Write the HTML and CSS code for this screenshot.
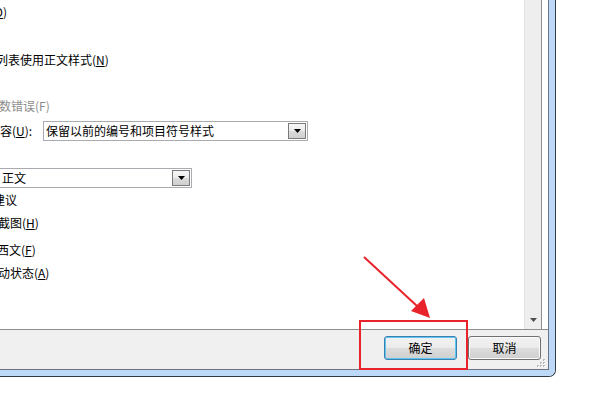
FILE: index.html
```html
<!DOCTYPE html>
<html lang="zh-CN">
<head>
<meta charset="utf-8">
<title>Word 选项</title>
<link rel="stylesheet" href="styles.css">
</head>
<body>
<div class="window">
  <div class="frame">
    <div class="client">
      <div class="main">
        <div class="pane">
          <div class="scrollarea">
            <div class="row r1"><span class="t1">(<span class="ak">O</span>)</span></div>
            <div class="row r2"><span class="t2">编号列表使用正文样式(<span class="ak">N</span>)</span></div>
            <div class="row r3 disabled"><span class="t3">数错误(F)</span></div>
            <div class="row r4">
              <span class="label4">内容(<span class="ak">U</span>):</span>
              <div class="combo combo1">
                <span class="combo-text">保留以前的编号和项目符号样式</span>
                <span class="combo-btn"><svg width="7" height="4" viewBox="0 0 7 4"><path d="M0 0H7L3.5 4Z" fill="#000"/></svg></span>
              </div>
            </div>
            <div class="row r5">
              <div class="combo combo2">
                <span class="combo-text">正文</span>
                <span class="combo-btn"><svg width="7" height="4" viewBox="0 0 7 4"><path d="M0 0H7L3.5 4Z" fill="#000"/></svg></span>
              </div>
            </div>
            <div class="row r6"><span class="t6">建议</span></div>
            <div class="row r7"><span class="t7">截图(<span class="ak">H</span>)</span></div>
            <div class="row r8"><span class="t8">西文(<span class="ak">F</span>)</span></div>
            <div class="row r9"><span class="t9">动状态(<span class="ak">A</span>)</span></div>
          </div>
          <div class="scrollbar">
            <div class="sb-down"><svg width="7" height="4" viewBox="0 0 7 4"><path d="M0 0H7L3.5 4Z" fill="#4d4d4d"/></svg></div>
          </div>
        </div>
        <div class="gap"></div>
      </div>
      <div class="footer">
        <button class="btn btn-default">确定</button>
        <button class="btn">取消</button>
        <svg class="grip" width="9" height="9" viewBox="0 0 9 9">
          <rect x="6" y="0" width="2" height="2" fill="#b8b8b8"/>
          <rect x="3" y="3" width="2" height="2" fill="#b8b8b8"/>
          <rect x="6" y="3" width="2" height="2" fill="#b8b8b8"/>
          <rect x="0" y="6" width="2" height="2" fill="#b8b8b8"/>
          <rect x="3" y="6" width="2" height="2" fill="#b8b8b8"/>
          <rect x="6" y="6" width="2" height="2" fill="#b8b8b8"/>
          <rect x="7" y="1" width="1" height="1" fill="#fff"/>
          <rect x="4" y="4" width="1" height="1" fill="#fff"/>
          <rect x="7" y="4" width="1" height="1" fill="#fff"/>
          <rect x="1" y="7" width="1" height="1" fill="#fff"/>
          <rect x="4" y="7" width="1" height="1" fill="#fff"/>
          <rect x="7" y="7" width="1" height="1" fill="#fff"/>
        </svg>
      </div>
    </div>
  </div>
</div>
<svg class="annotation" width="600" height="400" viewBox="0 0 600 400">
  <rect x="360" y="321" width="107" height="48" fill="none" stroke="#e8232b" stroke-width="2"/>
  <line x1="364" y1="257" x2="417" y2="306" stroke="#e8232b" stroke-width="2"/>
  <polygon points="430,318 411,311 424,298" fill="#e8232b"/>
</svg>
</body>
</html>
```

FILE: styles.css
```css
html, body {
  margin: 0;
  padding: 0;
}
body {
  width: 600px;
  height: 400px;
  overflow: hidden;
  background: #ffffff;
  font-family: "Noto Sans CJK SC", "Microsoft YaHei", sans-serif;
  font-size: 12px;
  color: #000;
  position: relative;
}
.window {
  width: 556px;
  height: 377px;
  box-sizing: border-box;
  border-right: 1px solid #323c47;
  border-bottom: 1px solid #323c47;
  border-bottom-right-radius: 7px;
  overflow: hidden;
}
.frame {
  height: 100%;
  box-sizing: border-box;
  background: #bcdaf7;
  padding-right: 6px;
  padding-bottom: 6px;
  border-bottom-right-radius: 6px;
}
.client {
  width: 549px;
  height: 370px;
  box-sizing: border-box;
  border-right: 1px solid #6b7480;
  border-bottom: 1px solid #6b7480;
  display: flex;
  flex-direction: column;
}
.main {
  height: 330px;
  box-sizing: border-box;
  border-bottom: 1px solid #8f8f8f;
  display: flex;
  background: #fff;
}
.pane {
  width: 542px;
  box-sizing: border-box;
  border-right: 1px solid #8f8f8f;
  display: flex;
}
.gap {
  flex: 1;
  background: #fff;
}
.scrollarea {
  width: 524px;
  overflow: hidden;
  padding-top: 2px;
  box-sizing: border-box;
  white-space: nowrap;
}
.row {
  height: 20px;
  line-height: 20px;
  display: flex;
  align-items: center;
}
.r2 { margin-top: 28px; }
.r3 { margin-top: 26px; }
.r4 { margin-top: 5px; }
.r5 { margin-top: 27px; }
.r6 { margin-top: 2px; }
.r7 { margin-top: 3px; }
.r8 { margin-top: 7px; }
.r9 { margin-top: 3px; }

.t1 { margin-left: -10px; }
.t2 { margin-left: -28px; }
.t3 { margin-left: -1px; }
.t6 { margin-left: -7px; }
.t7 { margin-left: -2px; }
.t8 { margin-left: -3px; }
.t9 { margin-left: -2px; }

.disabled { color: #8d8d8d; }
.ak { text-decoration: underline; }

.label4 {
  margin-left: -12px;
  width: 55px;
  flex: none;
}
.combo {
  height: 20px;
  box-sizing: border-box;
  border: 1px solid #a9abb0;
  background: #fff;
  display: flex;
  align-items: center;
  flex: none;
}
.combo1 {
  width: 265px;
  padding-left: 2px;
}
.combo2 {
  width: 196px;
  margin-left: -4px;
  padding-left: 5px;
}
.combo-text {
  flex: 1;
  line-height: 18px;
}
.combo-btn {
  width: 18px;
  height: 16px;
  margin: 0 1px 0 0;
  box-sizing: border-box;
  border: 1px solid #7a7a7a;
  background: linear-gradient(#f6f6f6 0%, #ebebeb 50%, #dcdcdc 51%, #cfcfcf 100%);
  display: flex;
  align-items: center;
  justify-content: center;
  flex: none;
}
.combo-btn svg { display: block; }

.scrollbar {
  width: 17px;
  box-sizing: border-box;
  border-left: 1px solid #e2e2e2;
  background: #eeeeee;
  display: flex;
  flex-direction: column;
  justify-content: flex-end;
}
.sb-down {
  height: 17px;
  display: flex;
  align-items: center;
  justify-content: center;
  padding-bottom: 2px;
  box-sizing: border-box;
}
.sb-down svg { display: block; }

.footer {
  flex: 1;
  background: #f0f0f0;
  display: flex;
  justify-content: flex-end;
  align-items: flex-start;
  gap: 11px;
  padding: 6px 7px 0 0;
  position: relative;
}
.btn {
  width: 73px;
  height: 24px;
  box-sizing: border-box;
  border: 1px solid #707070;
  border-radius: 3px;
  background: linear-gradient(#f2f2f2 0%, #ebebeb 50%, #dddddd 51%, #cfcfcf 100%);
  box-shadow: inset 0 0 0 1px #fbfbfb;
  font-family: "Noto Sans CJK SC", "Microsoft YaHei", sans-serif;
  font-size: 12px;
  color: #000;
  padding: 0;
  line-height: 22px;
}
.btn-default {
  border-color: #3c7fb1;
  box-shadow: inset 0 0 0 1px #5ec6f0;
}
.grip {
  position: absolute;
  right: 2px;
  bottom: 1px;
}
.annotation {
  position: absolute;
  left: 0;
  top: 0;
  pointer-events: none;
}
```
